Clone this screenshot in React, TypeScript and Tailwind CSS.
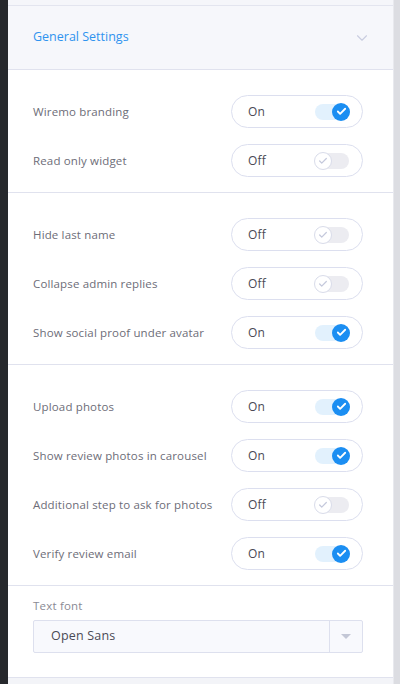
import { ChevronDown, Check } from "lucide-react";

type Row = { label: string; on: boolean };

const sections: Row[][] = [
  [
    { label: "Wiremo branding", on: true },
    { label: "Read only widget", on: false },
  ],
  [
    { label: "Hide last name", on: false },
    { label: "Collapse admin replies", on: false },
    { label: "Show social proof under avatar", on: true },
  ],
  [
    { label: "Upload photos", on: true },
    { label: "Show review photos in carousel", on: true },
    { label: "Additional step to ask for photos", on: false },
    { label: "Verify review email", on: true },
  ],
];

function Toggle({ on }: { on: boolean }) {
  return (
    <div className="w-[132px] h-[33px] rounded-full border border-[#dcdfef] bg-white flex items-center justify-between pl-[16px] pr-[13px]">
      <span className="text-[12px] tracking-[0.2px] text-[#4a4a55]">{on ? "On" : "Off"}</span>
      {/* switch */}
      <div
        className={
          on
            ? "relative w-[34px] h-[16px] rounded-full bg-[#e2f1fd]"
            : "relative w-[34px] h-[16px] rounded-full bg-[#ececf1]"
        }
      >
        {on ? (
          <div className="absolute -right-[1px] -top-[1px] w-[18px] h-[18px] rounded-full bg-[#1b8ef2] flex items-center justify-center">
            <Check size={11} strokeWidth={4} className="text-white" />
          </div>
        ) : (
          <div className="absolute -left-[1px] -top-[1px] w-[18px] h-[18px] rounded-full bg-white border border-[#d9dcea] flex items-center justify-center">
            <Check size={10} strokeWidth={3} className="text-[#c5c9dc]" />
          </div>
        )}
      </div>
    </div>
  );
}

export default function App() {
  return (
    <div
      className="w-[400px] h-[684px] flex bg-[#f3f4f8] overflow-hidden"
      style={{ fontFamily: "'Open Sans', sans-serif" }}
    >
      <div className="w-[8px] bg-[#26282c] shrink-0"></div>

      <div className="w-[385px] flex flex-col">
        <div className="h-[6px] bg-[#f5f6fa] border-b border-[#e3e5ef]"></div>

        {/* Header */}
        <div className="h-[64px] bg-[#f6f7fb] border-b border-[#e0e2ee] flex items-center justify-between pl-[25px] pr-[22px]">
          <span className="text-[12.5px] text-[#2f93ef]">General Settings</span>
          <ChevronDown size={18} strokeWidth={1.5} className="text-[#c9cde0]" />
        </div>

        {sections.map((rows, i) => (
          <div
            key={i}
            className="bg-white border-b border-[#e0e2ee] pt-[25px] pb-[15px] pl-[25px] pr-[30px] flex flex-col gap-[16px]"
          >
            {rows.map((r) => (
              <div key={r.label} className="flex items-center justify-between">
                <span className="text-[11.5px] tracking-[0.15px] text-[#6d6d78]">{r.label}</span>
                <Toggle on={r.on} />
              </div>
            ))}
          </div>
        ))}

        {/* Text font */}
        <div className="bg-white border-b border-[#e0e2ee] pt-[11px] pb-[24px] pl-[25px] pr-[30px]">
          <div className="text-[11.5px] tracking-[0.2px] text-[#8a8a94] mb-[6px]">Text font</div>
          <div className="h-[33px] flex border border-[#dde0ee] rounded-[2px] bg-[#f8f9fd]">
            <div className="flex-1 flex items-center pl-[17px] text-[12.5px] tracking-[0.2px] text-[#4a4a55]">Open Sans</div>
            <div className="w-[33px] border-l border-[#dde0ee] flex items-center justify-center">
              <div className="w-0 h-0 border-l-[5px] border-r-[5px] border-t-[5px] border-l-transparent border-r-transparent border-t-[#c3c7d6]"></div>
            </div>
          </div>
        </div>

        <div className="flex-1 bg-[#f3f4f8]"></div>
      </div>

      <div className="flex-1 bg-[#dcdde2] border-l border-[#e8e9ee]"></div>
    </div>
  );
}
